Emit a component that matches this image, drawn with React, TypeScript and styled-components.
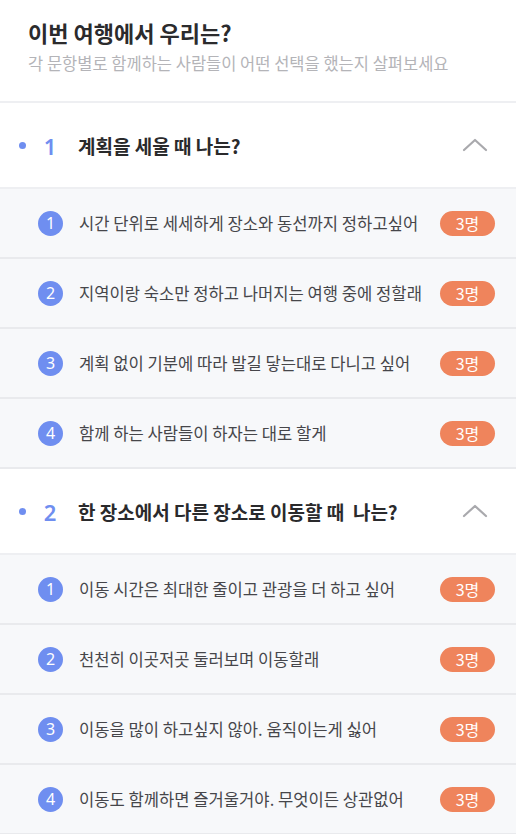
import React from 'react';
import styled, { createGlobalStyle } from 'styled-components';

const GlobalStyle = createGlobalStyle`
  html, body {
    margin: 0;
    padding: 0;
    background: #ffffff;
  }
  body {
    font-family: 'Noto Sans CJK KR', 'Noto Sans', sans-serif;
    -webkit-font-smoothing: antialiased;
  }
`;

const questions = [
  {
    title: '계획을 세울 때 나는?',
    options: [
      '시간 단위로 세세하게 장소와 동선까지 정하고싶어',
      '지역이랑 숙소만 정하고 나머지는 여행 중에 정할래',
      '계획 없이 기분에 따라 발길 닿는대로 다니고 싶어',
      '함께 하는 사람들이 하자는 대로 할게',
    ],
  },
  {
    title: '한 장소에서 다른 장소로 이동할 때  나는?',
    options: [
      '이동 시간은 최대한 줄이고 관광을 더 하고 싶어',
      '천천히 이곳저곳 둘러보며 이동할래',
      '이동을 많이 하고싶지 않아. 움직이는게 싫어',
      '이동도 함께하면 즐거울거야. 무엇이든 상관없어',
    ],
  },
];

const Page = styled.div`
  width: 516px;
  min-height: 834px;
  background: #f7f8fa;
`;

const Header = styled.header`
  background: #ffffff;
  padding: 17px 28px 0;
  height: 84px;
  border-bottom: 2px solid #eeeff2;
`;

const Title = styled.h1`
  margin: 0;
  font-size: 22px;
  font-weight: 700;
  line-height: 30px;
  color: #2b2b2d;
`;

const Subtitle = styled.p`
  margin: 4px 0 0;
  font-size: 16.5px;
  line-height: 24px;
  color: #b4b4b8;
`;

const QuestionHead = styled.div`
  display: flex;
  align-items: center;
  height: 84px;
  padding: 0 28px 0 19px;
  background: #ffffff;
  border-bottom: 2px solid #eeeff2;
`;

const Dot = styled.span`
  width: 7px;
  height: 7px;
  border-radius: 50%;
  background: #6f8ef0;
  flex-shrink: 0;
`;

const QuestionNo = styled.span`
  width: 48px;
  text-align: center;
  font-family: 'Noto Sans', sans-serif;
  font-size: 22px;
  font-weight: 600;
  color: #6f8ef0;
  margin-top: 2px;
`;

const QuestionTitle = styled.span`
  flex: 1;
  margin-left: 4px;
  font-size: 19px;
  font-weight: 700;
  color: #2a2a2c;
  white-space: pre;
`;

const Chevron = styled.svg`
  width: 26px;
  height: 16px;
  flex-shrink: 0;
`;

const OptionRow = styled.div`
  display: flex;
  align-items: center;
  height: 68px;
  padding: 0 21px 0 38px;
  background: #f7f8fa;
  border-bottom: 2px solid #e9eaed;
`;

const NumCircle = styled.span`
  width: 25px;
  height: 25px;
  border-radius: 50%;
  background: #6f8ef0;
  color: #ffffff;
  font-family: 'Noto Sans', sans-serif;
  font-size: 16px;
  display: flex;
  align-items: center;
  justify-content: center;
  flex-shrink: 0;
`;

const OptionText = styled.span`
  flex: 1;
  margin-left: 16px;
  font-size: 16.6px;
  color: #46464a;
  white-space: nowrap;
`;

const Badge = styled.span`
  width: 55px;
  height: 25px;
  border-radius: 13px;
  background: #ef845c;
  color: #ffffff;
  font-size: 16px;
  display: flex;
  align-items: center;
  justify-content: center;
  flex-shrink: 0;
`;

export default function App() {
  return (
    <Page>
      <GlobalStyle />
      <Header>
        <Title>이번 여행에서 우리는?</Title>
        <Subtitle>각 문항별로 함께하는 사람들이 어떤 선택을 했는지 살펴보세요</Subtitle>
      </Header>
      {questions.map((q, qi) => (
        <section key={qi}>
          <QuestionHead>
            <Dot />
            <QuestionNo>{qi + 1}</QuestionNo>
            <QuestionTitle>{q.title}</QuestionTitle>
            <Chevron viewBox="0 0 26 16">
              <path d="M2 13 L13 3 L24 13" fill="none" stroke="#a9a9ad" strokeWidth="2.2" strokeLinecap="round" strokeLinejoin="round" />
            </Chevron>
          </QuestionHead>
          {q.options.map((opt, oi) => (
            <OptionRow key={oi}>
              <NumCircle>{oi + 1}</NumCircle>
              <OptionText>{opt}</OptionText>
              <Badge>3명</Badge>
            </OptionRow>
          ))}
        </section>
      ))}
    </Page>
  );
}
